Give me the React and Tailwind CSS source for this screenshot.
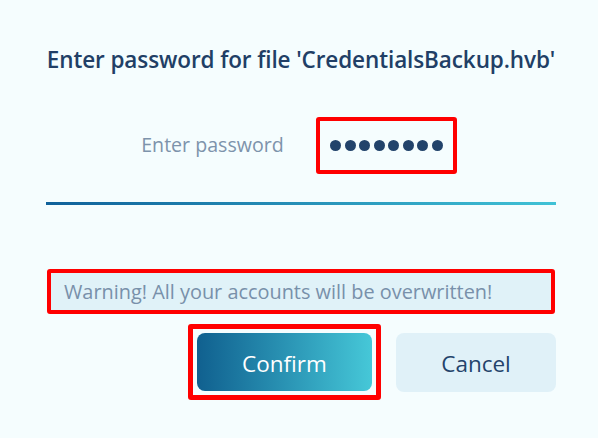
export default function App() {
  return (
    <div
      className="w-[598px] h-[438px] bg-[#f5fdfe] pl-[46px] pr-[42px] flex flex-col overflow-hidden"
      style={{ fontFamily: '"Open Sans", "Noto Sans", sans-serif' }}
    >
      <div className="mt-[45px] h-[30px] leading-[30px] text-center text-[22.5px] font-semibold text-[#213f66] whitespace-nowrap tracking-[-0.1px]">
        Enter password for file 'CredentialsBackup.hvb'
      </div>
      <div className="mt-[42px] flex items-center justify-center gap-[32px] pr-[4px]">
        <span className="text-[19.6px] text-[#7d93ab] leading-[26px] -mt-[1px]">Enter password</span>
        <div className="w-[141px] h-[57px] border-[4px] border-[#ff0000] rounded-[3px] flex items-center justify-center">
          <div className="flex gap-[3.5px]">
            {Array.from({ length: 8 }).map((_, i) => (
              <span key={i} className="block w-[11px] h-[11px] rounded-full bg-[#22436b]" />
            ))}
          </div>
        </div>
      </div>
      <div className="mt-[28px] h-[3px] bg-gradient-to-r from-[#10619a] to-[#40c2d6]" />
      <div className="mt-[64px] h-[45px] border-[4px] border-[#ff0000] rounded-[3px] bg-[#e0f2f8] flex items-center pl-[13px] mr-[1px] ml-[1px]">
        <span className="text-[19.9px] text-[#7890aa] whitespace-nowrap">
          Warning! All your accounts will be overwritten!
        </span>
      </div>
      <div className="mt-[10px] flex items-center justify-end gap-[15px]">
        <div className="border-[5px] border-[#ff0000] rounded-[3px] p-[4px]">
          <button className="w-[175px] h-[58px] pt-[4px] rounded-[8px] bg-gradient-to-r from-[#10608f] to-[#46c8d8] text-white text-[22.5px] flex items-center justify-center">
            Confirm
          </button>
        </div>
        <button className="w-[160px] h-[59px] pt-[4px] rounded-[8px] bg-[#e0f1f8] text-[#24436b] text-[22.5px] flex items-center justify-center">
          Cancel
        </button>
      </div>
    </div>
  );
}
